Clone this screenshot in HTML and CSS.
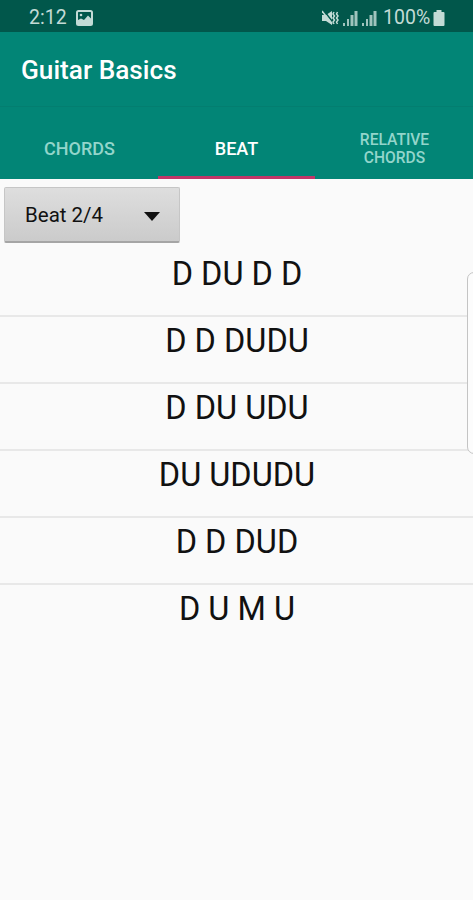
FILE: index.html
```html
<!DOCTYPE html>
<html lang="en">
<head>
  <meta charset="UTF-8" />
  <title>Guitar Basics</title>
  <link rel="stylesheet" href="styles.css">
</head>
<body>

  <div class="status-bar">
    <span class="clock">2:12</span>
    <svg class="picture" width="17" height="16" viewBox="0 0 17 16">
      <rect x="1" y="1" width="15" height="14" rx="1.5" fill="none" stroke="#c3dbd6" stroke-width="2" />
      <circle cx="5" cy="5" r="1.3" fill="#c3dbd6" />
      <path d="M2 14V10L5 8.5L8 10L12 5.5L15 8.5V14Z" fill="#c3dbd6" />
    </svg>
    <div class="status-icons">
      <svg width="17" height="16" viewBox="0 0 17 16">
        <path d="M0 5H4L10 1V15L4 11H0Z" fill="#c3dbd6" />
        <path d="M1.5 0L11.5 13" stroke="#01574b" stroke-width="1.4" />
        <path d="M0 1L10 14" stroke="#c3dbd6" stroke-width="1.5" />
        <path d="M12 2L11 4L12.5 6L11 8L12.5 10L11 12L12 14M15.5 2L14.5 4L16 6L14.5 8L16 10L14.5 12L15.5 14" fill="none" stroke="#c3dbd6" stroke-width="1.5" />
      </svg>
      <svg class="signal" width="15" height="16" viewBox="0 0 15 16">
        <path d="M0 13H2V16H0ZM4 9H6V16H4ZM7.5 5H10.5V16H7.5ZM11.5 1H14.5V16H11.5Z" fill="#9fc4bd" />
      </svg>
      <svg class="signal" width="15" height="16" viewBox="0 0 15 16">
        <path d="M0 13H2V16H0ZM4 9H6V16H4ZM7.5 5H10.5V16H7.5ZM11.5 1H14.5V16H11.5Z" fill="#9fc4bd" />
      </svg>
      <span class="battery-text">100%</span>
      <svg class="battery" width="12" height="16" viewBox="0 0 12 16">
        <path d="M3.5 0H8.5V2H10.5Q11.5 2 11.5 3V15Q11.5 16 10.5 16H1.5Q.5 16 .5 15V3Q.5 2 1.5 2H3.5Z" fill="#c3dbd6" />
      </svg>
    </div>
  </div>

  <div class="app-bar">
    <h1>Guitar Basics</h1>
  </div>

  <div class="tabs">
    <div class="tab">CHORDS</div>
    <div class="tab active">BEAT</div>
    <div class="tab small">RELATIVE<br>CHORDS</div>
  </div>

  <div class="content">
    <div class="spinner">
      <span>Beat 2/4</span>
      <svg class="arrow" width="16" height="9" viewBox="0 0 16 9"><path d="M0 0H16L8 9Z" fill="#111" /></svg>
    </div>

    <div class="beats">
      <div class="beat">D DU D D</div>
      <div class="beat">D D DUDU</div>
      <div class="beat">D DU UDU</div>
      <div class="beat">DU UDUDU</div>
      <div class="beat">D D DUD</div>
      <div class="beat">D U M U</div>
    </div>
  </div>

  <!-- edge panel handle -->
  <div class="edge-handle"></div>

</body>
</html>
```
FILE: styles.css
```css
* {
  box-sizing: border-box;
}

body {
  margin: 0;
  height: 900px;
  position: relative;
  overflow: hidden;
  background: #fafafa;
  color: #111;
  font-family: Roboto, sans-serif;
}

.status-bar {
  display: flex;
  align-items: center;
  height: 32px;
  padding: 3px 28px 0 29px;
  background: #01574b;
  color: #c3dbd6;
  font-size: 19.5px;
}

.clock {
  width: 47px;
}

.status-icons {
  display: flex;
  align-items: center;
  margin-left: auto;
}

.signal {
  margin-left: 4px;
}

.battery-text {
  margin: 0 4px 0 6px;
  width: 46px;
}

.app-bar {
  display: flex;
  align-items: center;
  height: 75px;
  padding: 2px 0 0 21px;
  background: #028576;
  border-bottom: 1px solid #037e70;
}

h1 {
  margin: 0;
  color: #fff;
  font-size: 26.2px;
  font-weight: 500;
}

.tabs {
  display: flex;
  height: 72px;
  background: #028576;
}

.tab {
  flex: 1;
  display: flex;
  align-items: center;
  justify-content: center;
  padding: 14px 0 0 1px;
  border-bottom: 3px solid transparent;
  color: #93d5cb;
  font-size: 18px;
  font-weight: 500;
  line-height: 18px;
  text-align: center;
}

.tab.active {
  color: #fff;
  padding-left: 0;
  border-bottom-color: #c23468;
}

.tab.small {
  font-size: 15.6px;
}

.content {
  padding-top: 8px;
}

.spinner {
  display: flex;
  align-items: center;
  justify-content: space-between;
  width: 176px;
  height: 56px;
  margin-left: 4px;
  padding: 0 19px 0 20px;
  background: linear-gradient(#dedede, #cbcbcb);
  border: 1px solid #c6c6c6;
  border-bottom: 2px solid #a5a5a5;
  border-radius: 2px;
  font-size: 20.5px;
}

.arrow {
  margin-top: 3px;
}

.beats {
  padding-top: 7px;
}

.beat {
  height: 67px;
  padding: 5px 0 0 1px;
  border-bottom: 2px solid #e8e8e8;
  font-size: 32.5px;
  line-height: 38px;
  text-align: center;
}

.beat:last-child {
  border-bottom: none;
}

.edge-handle {
  position: absolute;
  top: 272px;
  right: -8px;
  width: 14px;
  height: 182px;
  background: #fcfcfc;
  border: 1px solid #c4c4c4;
  border-radius: 7px;
}
```
